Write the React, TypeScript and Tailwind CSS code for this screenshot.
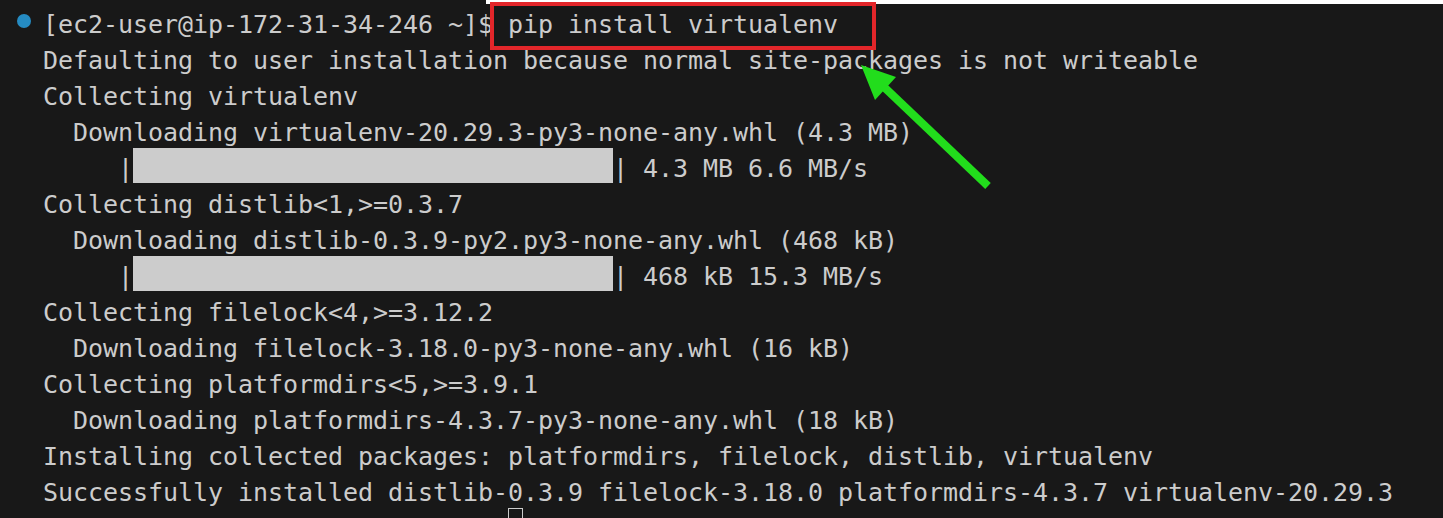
import React from 'react';

const Row: React.FC<{ dot?: boolean; children?: React.ReactNode }> = ({ dot, children }) => (
  <div className="flex h-[36px] shrink-0">
    <div className="w-[43px] shrink-0">
      {dot && <span className="mt-[7px] ml-[17px] block size-[14px] rounded-full bg-[#258bc2]" />}
    </div>
    <div className="flex items-start whitespace-pre leading-[36px]">{children}</div>
  </div>
);

const Bar: React.FC = () => <span className="-mt-[3px] block h-[35px] w-[480px] bg-[#cccccc]" />;

const App: React.FC = () => {
  const prompt = '[ec2-user@ip-172-31-34-246 ~]$ ';

  return (
    <div className="relative h-[518px] w-[1443px] overflow-hidden bg-[#181818] font-['DejaVu_Sans_Mono',monospace] text-[25px] tracking-[-0.05px] text-[#cccccc]">
      <div className="flex flex-col pt-[7px]">
        <Row dot>
          {prompt}pip install virtualenv
        </Row>
        <Row>Defaulting to user installation because normal site-packages is not writeable</Row>
        <Row>Collecting virtualenv</Row>
        <Row>  Downloading virtualenv-20.29.3-py3-none-any.whl (4.3 MB)</Row>
        <Row>
          {'     |'}
          <Bar />
          {'| 4.3 MB 6.6 MB/s'}
        </Row>
        <Row>Collecting distlib&lt;1,&gt;=0.3.7</Row>
        <Row>  Downloading distlib-0.3.9-py2.py3-none-any.whl (468 kB)</Row>
        <Row>
          {'     |'}
          <Bar />
          {'| 468 kB 15.3 MB/s'}
        </Row>
        <Row>Collecting filelock&lt;4,&gt;=3.12.2</Row>
        <Row>  Downloading filelock-3.18.0-py3-none-any.whl (16 kB)</Row>
        <Row>Collecting platformdirs&lt;5,&gt;=3.9.1</Row>
        <Row>  Downloading platformdirs-4.3.7-py3-none-any.whl (18 kB)</Row>
        <Row>Installing collected packages: platformdirs, filelock, distlib, virtualenv</Row>
        <Row>Successfully installed distlib-0.3.9 filelock-3.18.0 platformdirs-4.3.7 virtualenv-20.29.3</Row>
        <Row dot>
          {prompt}
          <span className="-mt-[3px] block h-[36px] w-[15px] border border-[#cccccc]" />
        </Row>
      </div>

      {/* annotations */}
      <div className="absolute top-0 left-[486px] right-0 h-[4px] bg-white" />
      <div className="absolute top-[2px] left-[490px] h-[48px] w-[386px] border-4 border-[#e3262a]" />
      <svg className="pointer-events-none absolute inset-0" width="1443" height="518">
        <line x1="988" y1="186" x2="884" y2="87" stroke="#22dd1c" strokeWidth="8" />
        <polygon points="861,65 896,77 875,100" fill="#22dd1c" />
      </svg>
    </div>
  );
};

export default App;
